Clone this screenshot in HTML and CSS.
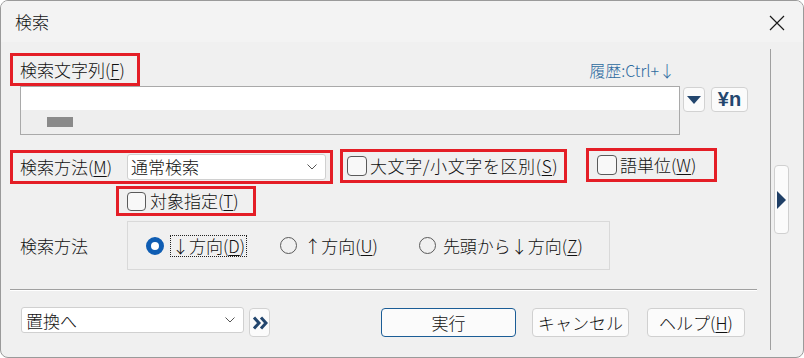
FILE: index.html
```html
<!DOCTYPE html>
<html lang="ja">
<head>
<meta charset="UTF-8" />
<title>検索</title>
<link rel="stylesheet" href="styles.css">
</head>
<body>

<div class="window">

  <!-- タイトルバー -->
  <div class="titlebar">
    <span class="title">検索</span>
    <svg class="close" width="16" height="16" viewBox="0 0 16 16">
      <path d="M1 1 L15 15 M15 1 L1 15" stroke="#1a1a1a" stroke-width="1.2" fill="none" />
    </svg>
  </div>

  <div class="body">
    <div class="main">

      <!-- 検索文字列 -->
      <div class="row-head">
        <div class="mark label-box">検索文字列(<u>F</u>)</div>
        <span class="history">履歴:Ctrl+↓</span>
      </div>

      <div class="row-input">
        <div class="textbox">
          <div class="text-line"></div>
          <div class="text-rest"><span class="caret"></span></div>
        </div>
        <button class="tool drop">
          <svg width="14" height="8" viewBox="0 0 14 8"><path d="M0 0 H14 L7 8 Z" fill="#23466e" /></svg>
        </button>
        <button class="tool yen">¥n</button>
      </div>

      <!-- オプション -->
      <div class="row-options">
        <div class="mark method">
          <span>検索方法(<u>M</u>)</span>
          <div class="combo combo-method">
            <span>通常検索</span>
            <svg width="10" height="6" viewBox="0 0 10 6"><path d="M0.5 0.5 L5 5 L9.5 0.5" stroke="#555" fill="none" /></svg>
          </div>
        </div>
        <div class="mark check check-case"><span class="box"></span>大文字/小文字を区別(<u>S</u>)</div>
        <div class="mark check check-word"><span class="box"></span>語単位(<u>W</u>)</div>
      </div>

      <div class="row-target">
        <div class="mark check check-target"><span class="box"></span>対象指定(<u>T</u>)</div>
      </div>

      <!-- 方向 -->
      <div class="row-dir">
        <span class="dir-label">検索方法</span>
        <div class="group">
          <span class="radio checked"></span>
          <span class="radio-text focus">↓方向(<u>D</u>)</span>
          <span class="radio r2"></span>
          <span class="radio-text">↑方向(<u>U</u>)</span>
          <span class="radio r3"></span>
          <span class="radio-text">先頭から↓方向(<u>Z</u>)</span>
        </div>
      </div>

      <div class="sep"></div>

      <!-- 下部ボタン -->
      <div class="row-bottom">
        <div class="combo combo-replace">
          <span>置換へ</span>
          <svg width="10" height="6" viewBox="0 0 10 6"><path d="M0.5 0.5 L5 5 L9.5 0.5" stroke="#555" fill="none" /></svg>
        </div>
        <button class="tool more">
          <svg width="16" height="14" viewBox="0 0 16 14"><path d="M2 1.5 L7 7 L2 12.5 M9 1.5 L14 7 L9 12.5" stroke="#23466e" stroke-width="3" fill="none" /></svg>
        </button>
        <button class="btn btn-run">実行</button>
        <button class="btn btn-cancel">キャンセル</button>
        <button class="btn btn-help">ヘルプ(<u>H</u>)</button>
      </div>

    </div>

    <div class="side">
      <button class="side-btn">
        <svg width="9" height="18" viewBox="0 0 9 18"><path d="M0 0 L9 9 L0 18 Z" fill="#1f3f66" /></svg>
      </button>
    </div>
  </div>

</div>

</body>
</html>
```

FILE: styles.css
```css
* { box-sizing: border-box; }
body { margin: 0; background: #ffffff; font-family: "Noto Sans CJK JP", "Noto Sans", sans-serif; font-size: 17px; font-weight: 300; color: #111; }
u { text-decoration-thickness: 1px; text-underline-offset: 2px; }
button { font-family: inherit; font-size: inherit; font-weight: inherit; color: inherit; padding: 0; cursor: pointer; }

.window {
  width: 804px; height: 358px; background: #f0f0f0;
  border: 1px solid #9a9a9a; border-radius: 8px; overflow: hidden;
  display: flex; flex-direction: column;
}

.titlebar {
  height: 41px; flex: none; background: #f3f3f3;
  display: flex; align-items: center; justify-content: space-between;
  padding: 0 18px 0 14px;
}
.title { font-size: 17px; line-height: 20px; }
.close { display: block; margin-top: 2px; }

.body { flex: 1; display: flex; }
.main { width: 769px; padding-left: 9px; }

.mark { border: 3px solid #e41e26; display: flex; align-items: center; line-height: 20px; }

/* 検索文字列 */
.row-head { display: flex; align-items: center; justify-content: space-between; width: 670px; margin-top: 11px; padding-right: 5px; }
.label-box { width: 130px; height: 33px; padding-left: 7px; }
.history { color: #2d6a9f; font-size: 16px; line-height: 18px; }

.row-input { display: flex; align-items: flex-start; }
.textbox { width: 660px; height: 49px; margin-left: 10px; border: 1px solid #a9a9a9; background: #eeeeee; }
.text-line { height: 23px; background: #ffffff; }
.text-rest { padding: 7px 0 0 26px; }
.caret { display: block; width: 26px; height: 10px; background: #8a8a8a; }

.tool {
  display: flex; align-items: center; justify-content: center;
  background: #fbfbfb; border: 1px solid #d2d2d2; border-radius: 4px;
}
.drop { width: 22px; height: 25px; margin: 1px 0 0 3px; }
.yen { width: 37px; height: 25px; margin: 1px 0 0 6px; color: #23466e; font-family: "Liberation Sans", sans-serif; font-weight: bold; font-size: 20px; }

/* オプション */
.row-options { display: flex; align-items: flex-start; margin-top: 13px; }
.method { width: 323px; height: 34px; margin-top: 2px; padding: 0 4px 0 7px; }
.combo {
  display: flex; align-items: center; justify-content: space-between;
  background: #ffffff; border: 1px solid #d0d0d0; border-radius: 3px;
}
.combo-method { width: 199px; height: 26px; margin-left: auto; padding: 0 8px 0 3px; }

.check { height: 34px; }
.box { width: 20px; height: 20px; border: 1px solid #5a5a5a; border-radius: 4px; background: #f8f8f8; margin-right: 3px; flex: none; }
.check-case { width: 227px; margin-left: 7px; margin-top: 1px; padding-left: 4px; letter-spacing: 0.6px; }
.check-word { width: 131px; margin-left: 19px; padding-left: 8px; }

.row-target { display: flex; margin-top: 2px; padding-left: 106px; }
.check-target { width: 140px; height: 30px; padding-left: 8px; }
.check-target .box { width: 19px; height: 19px; margin-right: 4px; }

/* 方向 */
.row-dir { display: flex; align-items: center; margin-top: 5px; }
.dir-label { width: 117px; padding-left: 10px; line-height: 20px; }
.group {
  width: 483px; height: 49px; border: 1px solid #d9d9d9;
  display: flex; align-items: center; padding-left: 18px; line-height: 20px;
}
.radio { width: 17px; height: 17px; border: 1px solid #5a5a5a; border-radius: 50%; flex: none; margin-right: 7px; }
.radio.checked { border: 5px solid #0f5db3; background: #ffffff; width: 18px; height: 18px; }
.radio.r2 { margin-left: 34px; }
.radio.r3 { margin-left: 41px; }
.focus { outline: 1px dotted #222; outline-offset: 0; padding: 0 1px; }

.sep { width: 747px; height: 1px; background: #a0a0a0; margin-top: 19px; box-shadow: 0 1px 0 #ffffff; }

/* 下部ボタン */
.row-bottom { display: flex; align-items: flex-start; margin-top: 17px; padding-left: 11px; }
.combo-replace { width: 223px; height: 26px; padding: 0 8px 0 4px; }
.more { width: 21px; height: 29px; margin: 1px 0 0 5px; }
.btn { height: 29px; margin-top: 1px; background: #fbfbfb; border: 1px solid #d0d0d0; border-radius: 4px; line-height: 20px; }
.btn-run { width: 135px; margin-left: 111px; border-color: #1b5d96; }
.btn-cancel { width: 97px; margin-left: 16px; }
.btn-help { width: 98px; margin-left: 18px; }

.side { flex: 1; margin: 7px 0 7px 0; border-left: 1px solid #a0a0a0; padding-left: 3px; }
.side-btn {
  display: flex; align-items: center; justify-content: center;
  width: 15px; height: 69px; margin-top: 116px;
  background: #fbfbfb; border: 1px solid #d0d0d0; border-radius: 4px;
}
```
